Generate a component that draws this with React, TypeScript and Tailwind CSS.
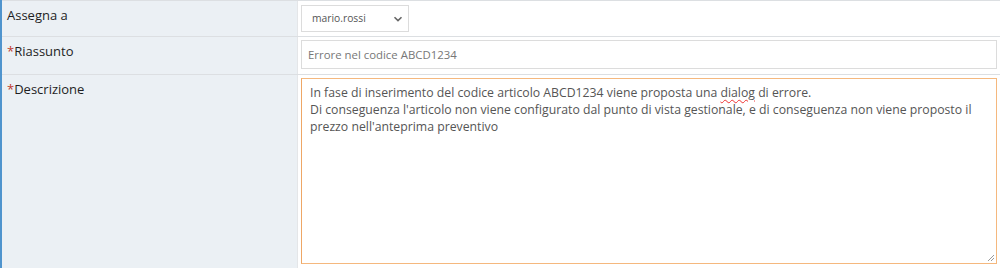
import React from "react";

const font = { fontFamily: '"Open Sans", "Noto Sans", sans-serif' };

function Label({ text, required }: { text: string; required?: boolean }) {
  return (
    <div className="bg-[#ebf0f4] pl-[5px] pt-[5px] text-[13px] leading-[18px] text-[#1e1e1e]">
      {required && <span className="text-[#c0392b]">*</span>}
      {text}
    </div>
  );
}

export default function App() {
  return (
    <div
      className="w-[1000px] h-[268px] overflow-hidden bg-white border-l-[2px] border-[#4f94cd]"
      style={font}
    >
      <div className="grid grid-cols-[295px_1fr] border-t border-[#dcdfe2]">
        <Label text="Assegna a" />
        <div className="h-[35px] border-l border-[#e4e6e8] pl-[3px] pt-[4px]">
          <div className="w-[108px] h-[27px] border border-[#dcdcdc] flex items-center justify-between pl-[10px] pr-[5px] text-[10.3px] text-[#555]">
            <span>mario.rossi</span>
            <svg width="10" height="10" viewBox="0 0 10 10">
              <path d="M1.5 3.2 L5 6.6 L8.5 3.2" fill="none" stroke="#666" strokeWidth="1.6" />
            </svg>
          </div>
        </div>
      </div>

      <div className="grid grid-cols-[295px_1fr] border-t border-[#dcdfe2]">
        <Label text="Riassunto" required />
        <div className="h-[37px] border-l border-[#e4e6e8] pl-[3px] pr-[3px] pt-[3px]">
          <div className="h-[29px] border border-[#dcdcdc] flex items-center pl-[6px] text-[11.4px] text-[#777]">
            Errore nel codice ABCD1234
          </div>
        </div>
      </div>

      <div className="grid grid-cols-[295px_1fr] border-t border-[#dcdfe2]">
        <Label text="Descrizione" required />
        <div className="h-[193px] border-l border-[#e4e6e8] pl-[3px] pr-[3px] pt-[3px]">
          <div className="relative h-[186px] border border-[#f5b87e] border-l-[#eea766] px-[8px] pt-[5px] text-[12.25px] leading-[17px] text-[#555]">
            <div>
              In fase di inserimento del codice articolo ABCD1234 viene proposta una{" "}
              <span className="underline decoration-wavy decoration-[#e33] decoration-1 underline-offset-2">dialog</span>{" "}
              di errore.
            </div>
            <div>
              Di conseguenza l'articolo non viene configurato dal punto di vista gestionale, e di conseguenza non viene proposto il
              prezzo nell'anteprima preventivo
            </div>
            <svg className="absolute right-[1px] bottom-[1px]" width="9" height="9" viewBox="0 0 9 9">
              <path d="M8 2 L2 8 M8 5 L5 8" stroke="#999" strokeWidth="1" />
            </svg>
          </div>
        </div>
      </div>
    </div>
  );
}
